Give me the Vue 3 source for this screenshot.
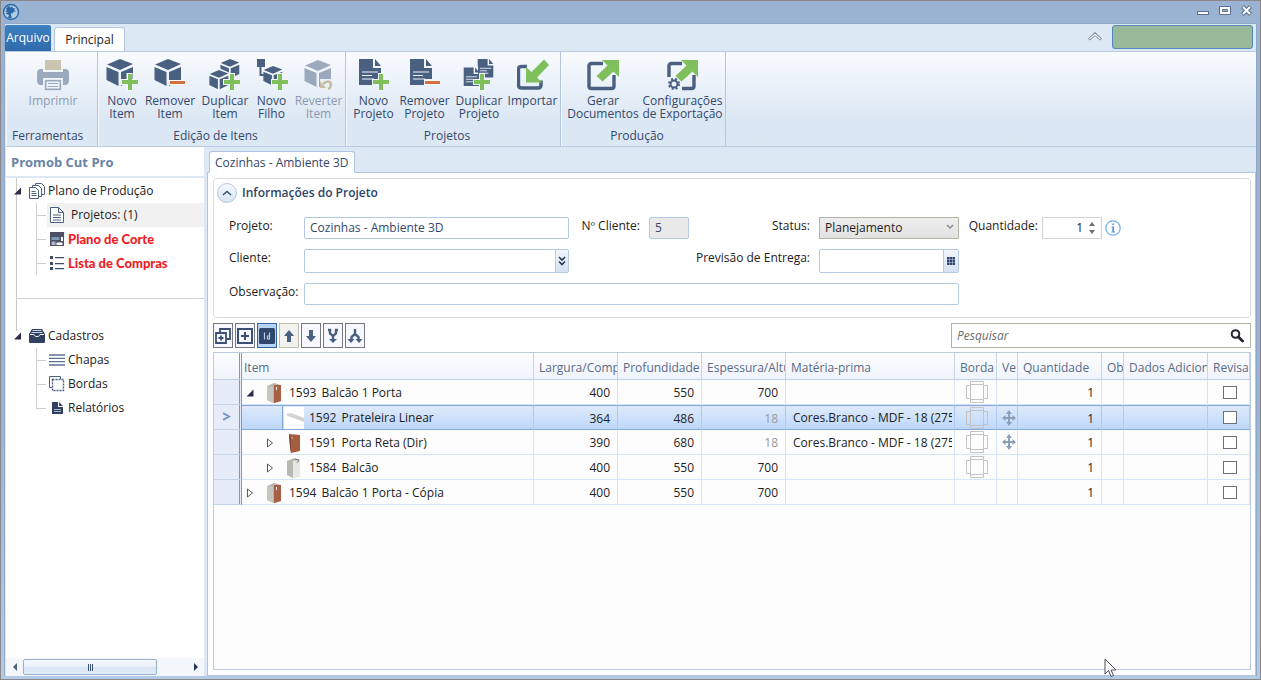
<script setup>
import { ref } from 'vue'

const ribbonGroups = [
  { name: 'Ferramentas', cls: 'g-tools', buttons: [{ icon: 'printer', lines: ['Imprimir'], disabled: true }] },
  {
    name: 'Edição de Itens',
    cls: 'g-items',
    buttons: [
      { icon: 'cube-add', lines: ['Novo', 'Item'] },
      { icon: 'cube-remove', lines: ['Remover', 'Item'] },
      { icon: 'cube-dup', lines: ['Duplicar', 'Item'] },
      { icon: 'cube-child', lines: ['Novo', 'Filho'] },
      { icon: 'cube-undo', lines: ['Reverter', 'Item'], disabled: true },
    ],
  },
  {
    name: 'Projetos',
    cls: 'g-projects',
    buttons: [
      { icon: 'doc-add', lines: ['Novo', 'Projeto'] },
      { icon: 'doc-remove', lines: ['Remover', 'Projeto'] },
      { icon: 'doc-dup', lines: ['Duplicar', 'Projeto'] },
      { icon: 'import', lines: ['Importar'] },
    ],
  },
  {
    name: 'Produção',
    cls: 'g-production',
    buttons: [
      { icon: 'export', lines: ['Gerar', 'Documentos'] },
      { icon: 'export-cfg', lines: ['Configurações', 'de Exportação'] },
    ],
  },
]

const tools = [
  { icon: 't-expand', label: 'Expandir tudo' },
  { icon: 't-plus', label: 'Expandir' },
  { icon: 't-id', label: 'Mostrar Id', cls: 'on' },
  { icon: 't-up', label: 'Mover para cima', cls: 'dim' },
  { icon: 't-down', label: 'Mover para baixo' },
  { icon: 't-merge', label: 'Agrupar' },
  { icon: 't-split', label: 'Separar' },
]

const rows = ref([
  { id: 1593, name: 'Balcão 1 Porta', level: 0, exp: 'open', icon: 'p-cabinet', w: 400, d: 550, h: 700, edge: true, qty: 1, rev: false },
  { id: 1592, name: 'Prateleira Linear', level: 1, exp: '', icon: 'p-shelf', w: 364, d: 486, h: 18, mat: 'Cores.Branco - MDF - 18 (2750', edge: true, vein: true, qty: 1, rev: false, selected: true },
  { id: 1591, name: 'Porta Reta (Dir)', level: 1, exp: 'closed', icon: 'p-door', w: 390, d: 680, h: 18, mat: 'Cores.Branco - MDF - 18 (2750', edge: true, vein: true, qty: 1, rev: false },
  { id: 1584, name: 'Balcão', level: 1, exp: 'closed', icon: 'p-box', w: 400, d: 550, h: 700, edge: true, qty: 1, rev: false },
  { id: 1594, name: 'Balcão 1 Porta - Cópia', level: 0, exp: 'closed', icon: 'p-cabinet', w: 400, d: 550, h: 700, qty: 1, rev: false },
])

const project = ref('Cozinhas - Ambiente 3D')
const clientNo = ref('5')
const client = ref('')
const note = ref('')
const delivery = ref('')
const status = ref('Planejamento')
const quantity = ref(1)
const search = ref('')
</script>

<template>
  <div class="window">
    <svg class="defs" aria-hidden="true">
      <symbol id="plus" viewBox="0 0 16 16">
        <path d="M6 0h4v6h6v4h-6v6H6v-6H0V6h6z" fill="#7fc05c" />
      </symbol>
      <symbol id="cube" viewBox="0 0 28 28">
        <g fill="#4a6081">
          <path d="M14 0L27 5L14 11L1 5.500z" />
          <path d="M0.500 8L12.500 13V27L0.500 21z" />
          <path d="M15 13L27 8V21L15 27z" />
        </g>
      </symbol>
      <symbol id="doc" viewBox="0 0 24 28">
        <path d="M1 0H15V9H23V26H1z M17 0L23 7H17z" fill="#4a6081" />
        <path d="M4 13H20M4 16.500H14M4 20H16" stroke="#eef3fa" stroke-width="1.200" fill="none" />
      </symbol>
      <symbol id="printer" viewBox="0 0 32 32">
        <rect x="8" y="1" width="16" height="10" fill="#a09468" />
        <path d="M0 14q0-4 4-4h2v3h20v-3h2q4 0 4 4v7q0 5-4 5h-2v-7H6v7H4q-4 0-4-5z" fill="#4a6081" />
        <rect x="8.700" y="21.700" width="14.600" height="8.600" fill="#f3f7fc" stroke="#4a6081" stroke-width="1.600" />
        <path d="M11 24.500h10M11 27.500h10" stroke="#4a6081" />
      </symbol>
      <symbol id="cube-add" viewBox="0 0 32 32">
        <use href="#cube" x="0" y="0" width="28" height="28" />
        <path d="M20.500 14h6v6h6v6h-6v6h-6v-6h-6v-6h6z" fill="#f3f7fc" />
        <use href="#plus" x="16" y="15" width="16" height="16" />
      </symbol>
      <symbol id="cube-remove" viewBox="0 0 32 32">
        <use href="#cube" x="0" y="0" width="28" height="28" />
        <path d="M15 21h17v5H15z" fill="#f3f7fc" />
        <rect x="16" y="22" width="15" height="3" fill="#d2713c" />
      </symbol>
      <symbol id="cube-dup" viewBox="0 0 32 32">
        <use href="#cube" x="11" y="0" width="20" height="20" />
        <path d="M10 9L21 14V31L10 32L0 28V14z" fill="#f0f5fb" />
        <use href="#cube" x="0" y="11" width="20" height="20" />
        <path d="M20 14h6v6h6v6h-6v6h-6v-6h-6v-6h6z" fill="#f0f5fb" />
        <use href="#plus" x="15" y="15" width="16" height="16" />
      </symbol>
      <symbol id="cube-child" viewBox="0 0 32 32">
        <rect x="1" y="0" width="8" height="8" fill="#4a6081" />
        <path d="M4.500 8V16H9" fill="none" stroke="#4a6081" stroke-width="2" />
        <use href="#cube" x="7" y="7" width="20" height="20" />
        <path d="M21 14h6v6h6v6h-6v6h-6v-6h-6v-6h6z" fill="#f0f5fb" />
        <use href="#plus" x="16" y="15" width="16" height="16" />
      </symbol>
      <symbol id="cube-undo" viewBox="0 0 32 32">
        <use href="#cube" x="1" y="1" width="28" height="28" />
        <path d="M17 20h14v12H17z" fill="#eaf1f9" />
        <path d="M20 25q6-5 8 0q0 4-3 5" fill="none" stroke="#a88a52" stroke-width="2.500" />
        <path d="M17 22v7h6z" fill="#a88a52" />
      </symbol>
      <symbol id="doc-add" viewBox="0 0 32 32">
        <use href="#doc" x="0" y="0" width="24" height="28" />
        <path d="M20 14h6v6h6v6h-6v6h-6v-6h-6v-6h6z" fill="#f0f5fb" />
        <use href="#plus" x="15" y="15" width="16" height="16" />
      </symbol>
      <symbol id="doc-remove" viewBox="0 0 32 32">
        <use href="#doc" x="0" y="0" width="24" height="28" />
        <path d="M15 20h17v6H15z" fill="#f0f5fb" />
        <rect x="16" y="22" width="15" height="3" fill="#d2713c" />
      </symbol>
      <symbol id="doc-dup" viewBox="0 0 32 32">
        <use href="#doc" x="14" y="0" width="17" height="20" />
        <path d="M0 7h15v22H0z" fill="#f0f5fb" />
        <use href="#doc" x="0" y="8" width="17" height="21" />
        <path d="M16 14h6v6h6v6h-6v6h-6v-6h-6v-6h6z" fill="#f0f5fb" />
        <use href="#plus" x="11" y="15" width="16" height="16" />
      </symbol>
      <symbol id="import" viewBox="0 0 32 32">
        <path d="M10 7.500H4.500q-3 0-3 3V26q0 3 3 3H21q3 0 3-3V21.500" fill="none" stroke="#4a6081" stroke-width="3.400" />
        <path d="M9 8L14.500 13L27 0.500L32 6L20 18.500L25 23.500H9z" fill="#7fc05c" />
      </symbol>
      <symbol id="export" viewBox="0 0 32 32">
        <path d="M16 4.500H4.500q-2.500 0-2.500 2.500V27q0 2.500 2.500 2.500H24.500q2.500 0 2.500-2.500V16" fill="none" stroke="#4a6081" stroke-width="3.400" />
        <path d="M15 1H32V18L26.500 12.500L15.500 22.500L9.500 17L20.500 6.500z" fill="#7fc05c" />
      </symbol>
      <symbol id="export-cfg" viewBox="0 0 32 32">
        <path d="M15 4.500H4.500q-2.500 0-2.500 2.500V18M15 29.500H24.500q2.500 0 2.500-2.500V16" fill="none" stroke="#4a6081" stroke-width="3.400" />
        <path d="M14 1H31V18L25.500 12.500L14.500 22.500L8.500 17L19.500 6.500z" fill="#7fc05c" />
        <circle cx="7" cy="25" r="3.500" fill="none" stroke="#4a6081" stroke-width="2" />
        <circle cx="7" cy="25" r="5" fill="none" stroke="#4a6081" stroke-width="2" stroke-dasharray="2 2" />
      </symbol>

      <symbol id="t-expand" viewBox="0 0 18 18">
        <path d="M6 6V2h10v10h-4" fill="none" stroke="#3b5074" stroke-width="1.800" />
        <path d="M2 6h10v10H2zM7 8.500v5M4.500 11h5" fill="none" stroke="#3b5074" stroke-width="1.800" />
      </symbol>
      <symbol id="t-plus" viewBox="0 0 18 18">
        <path d="M2 2h14v14H2zM9 5v8M5 9h8" fill="none" stroke="#3b5074" stroke-width="2" />
      </symbol>
      <symbol id="t-id" viewBox="0 0 18 18">
        <rect x="1" y="1" width="16" height="16" rx="1.500" fill="#30466a" />
        <path d="M6.500 5.500v7M11.500 5.500v7M11.500 9h-2v3h2" fill="none" stroke="#b9cbe2" stroke-width="1.200" />
      </symbol>
      <symbol id="t-up" viewBox="0 0 18 18">
        <path d="M9 3L14 9H11V15H7V9H4z" fill="#4a6081" />
      </symbol>
      <symbol id="t-down" viewBox="0 0 18 18">
        <path d="M9 15L14 9H11V3H7V9H4z" fill="#4a6081" />
      </symbol>
      <symbol id="t-merge" viewBox="0 0 18 18">
        <path d="M4 3H6V6.500L9 9L12 6.500V3H14M9 9v4" fill="none" stroke="#4a6081" stroke-width="2.400" />
        <path d="M5 12H13L9 16z" fill="#4a6081" />
      </symbol>
      <symbol id="t-split" viewBox="0 0 18 18">
        <path d="M9 2V7L5.500 10V13M9 7L12.500 10V13" fill="none" stroke="#4a6081" stroke-width="2.400" />
        <path d="M1.500 12H8.500L5 16zM9.500 12H16.500L13 16z" fill="#4a6081" />
      </symbol>

      <symbol id="p-cabinet" viewBox="0 0 20 22">
        <path d="M3 4L10 1L17 3V19L10 21L3 18z" fill="#b9b5ab" />
        <path d="M3 4L9 5V21L3 18z" fill="#c7c5bf" />
        <path d="M10 3L17 3V19L10 21z" fill="#a85f43" />
        <path d="M12.500 5v3" stroke="#fff" />
      </symbol>
      <symbol id="p-shelf" viewBox="0 0 20 22">
        <rect width="20" height="22" fill="#fff" />
        <path d="M2 7L7 6L20 11V15L4 9z" fill="#d4d4d4" />
      </symbol>
      <symbol id="p-door" viewBox="0 0 20 22">
        <path d="M5 2L16 3V19L7 21L6 15z" fill="#a55d40" />
        <path d="M5 2L7 5V21L6 15z" fill="#7d4430" />
        <path d="M8 5v2" stroke="#e3bca9" />
      </symbol>
      <symbol id="p-box" viewBox="0 0 20 22">
        <path d="M3 4L10 1L16 3V19L9 21L3 18z" fill="#b8b8b2" />
        <path d="M9 4L16 3V19L9 21z" fill="#e8e8e5" />
        <path d="M11 2L15 3L13 6" stroke="#777" fill="none" />
      </symbol>
    </svg>

    <header class="titlebar">
      <svg class="logo" viewBox="0 0 18 18" aria-hidden="true">
        <circle cx="9" cy="9" r="7.500" fill="#b3cbe5" stroke="#2c6aa6" stroke-width="1.400" />
        <path d="M4 6Q5 3 8 3L7.500 4.500L11 3.500L10.500 5L13.500 5.500L12 6.500L14 8.500L11.500 8.500L11 10.500L9.500 9.500L9 12L10 15.500L6 15L7 12L3.500 10.500L5.500 9.500L3 8L5 7.500z" fill="#2c6aa6" />
      </svg>
      <div class="caption-buttons">
        <button aria-label="Minimizar">
          <svg viewBox="0 0 14 14"><rect x="1.500" y="6.500" width="11" height="3" fill="#fff" stroke="#5d6f8c" /></svg>
        </button>
        <button aria-label="Maximizar">
          <svg viewBox="0 0 14 14">
            <path d="M1.500 1.500h11v8h-11zM4.500 4.500v2h5v-2z" fill="#fff" fill-rule="evenodd" stroke="#5d6f8c" />
          </svg>
        </button>
        <button aria-label="Fechar">
          <svg viewBox="0 0 14 14">
            <path d="M2.500 1.500l8 8M10.500 1.500l-8 8" stroke="#5d6f8c" stroke-width="4" />
            <path d="M3 2l7 7M10 2l-7 7" stroke="#fff" stroke-width="2" />
          </svg>
        </button>
      </div>
    </header>

    <div class="frame">
      <nav class="ribbon-tabs">
        <button class="file">Arquivo</button>
        <button class="rtab">Principal</button>
        <span class="grow"></span>
        <button class="collapse" aria-label="Recolher faixa">
          <svg viewBox="0 0 14 9"><path d="M1 7.500L7 2l6 5.500" fill="none" stroke="#7b8494" stroke-width="3" /><path d="M1.500 7L7 2.300L12.500 7" fill="none" stroke="#fff" stroke-width="1.200" /></svg>
        </button>
        <div class="account"></div>
      </nav>

      <section class="ribbon">
        <div v-for="g in ribbonGroups" :key="g.name" class="group" :class="g.cls">
          <div class="group-buttons">
            <button v-for="b in g.buttons" :key="b.icon" class="rbtn" :disabled="b.disabled">
              <svg width="32" height="32" aria-hidden="true"><use :href="'#' + b.icon" width="32" height="32" /></svg>
              <span v-for="l in b.lines" :key="l">{{ l }}</span>
            </button>
          </div>
          <div class="group-name">{{ g.name }}</div>
        </div>
      </section>

      <div class="body">
        <aside class="sidebar">
          <h1>Promob Cut Pro</h1>
          <div class="tree">
            <section class="branch">
              <div class="node root">
                <svg class="tri" viewBox="0 0 8 8"><path d="M8 0V8H0z" fill="#2e2c4d" /></svg>
                <svg class="ico16" viewBox="0 0 16 16" fill="#fff" stroke="#4a6081">
                  <path d="M6.500 0.500h6l3 3v8h-9z" /><path d="M3.500 2.500h6l3 3v8h-9z" /><path d="M0.500 4.500h6l3 3v8h-9zM2.500 8.500h4M2.500 10.500h5M2.500 12.500h5" />
                </svg>
                <span>Plano de Produção</span>
              </div>
              <ul>
                <li class="node active">
                  <svg class="ico16" viewBox="0 0 16 16" fill="#fff" stroke="#4a6081">
                    <path d="M1.500 0.500h8l5 5v10h-13zM9.500 0.500v5h5M4 8h8M4 10.500h8M4 13h8" />
                  </svg>
                  <span>Projetos: (1)</span>
                </li>
                <li class="node hot">
                  <svg class="ico16" viewBox="0 0 16 16">
                    <path d="M1 1h14v14H1z" fill="#4a4f63" />
                    <path d="M2.500 6h8v3h-8z" fill="#8197b8" />
                    <path d="M12 6h2v4h-2zM7.500 11.500h6v2.500h-6z" fill="#fff" />
                    <path d="M2.500 10.500h4v3.500h-4z" fill="#a9b8cf" />
                  </svg>
                  <span>Plano de Corte</span>
                </li>
                <li class="node hot">
                  <svg class="ico16" viewBox="0 0 16 16" fill="#3d4b6b">
                    <path d="M1 1h3v3H1zM1 7h3v3H1zM1 12h3v3H1zM6 2h9v1.200H6zM6 8h9v1.200H6zM6 13h9v1.200H6z" />
                  </svg>
                  <span>Lista de Compras</span>
                </li>
              </ul>
            </section>
            <hr />
            <section class="branch last">
              <div class="node root">
                <svg class="tri" viewBox="0 0 8 8"><path d="M8 0V8H0z" fill="#2e2c4d" /></svg>
                <svg class="ico16" viewBox="0 0 16 16">
                  <path d="M3 1h10l3 5v8q0 1-1 1H1q-1 0-1-1V6z" fill="#30415f" />
                  <path d="M3.500 2.500h9M2.500 4.500h11" stroke="#c7d3e4" />
                  <path d="M1 6.500h4l1.500 2h3l1.500-2h4" stroke="#eef3fa" fill="none" />
                </svg>
                <span>Cadastros</span>
              </div>
              <ul>
                <li class="node">
                  <svg class="ico16" viewBox="0 0 16 16"><path d="M0 3h16M0 6.300h16M0 9.700h16M0 13h16" stroke="#5f7294" stroke-width="1.300" /></svg>
                  <span>Chapas</span>
                </li>
                <li class="node">
                  <svg class="ico16" viewBox="0 0 16 16" fill="none" stroke="#4a6081">
                    <path d="M3 11.500H0.500V0.500h11V3" /><path d="M3.500 3.500h11v11h-11z" stroke-dasharray="2 1" stroke-width="1.400" />
                  </svg>
                  <span>Bordas</span>
                </li>
                <li class="node">
                  <svg class="ico16" viewBox="0 0 16 16"><path d="M3 2h6v5h5v7H3zM10 2l4 4h-4z" fill="#30415f" /><path d="M5 9.500h7M5 11.500h7" stroke="#c7d3e4" stroke-width="0.800" /></svg>
                  <span>Relatórios</span>
                </li>
              </ul>
            </section>
          </div>
          <div class="hscroll">
            <button aria-label="Rolar à esquerda"><svg viewBox="0 0 4 8"><path d="M4 0v8L0 4z" fill="#4a6081" /></svg></button>
            <div class="track"><div class="thumb"><i></i><i></i><i></i></div></div>
            <button aria-label="Rolar à direita"><svg viewBox="0 0 4 8"><path d="M0 0v8L4 4z" fill="#24365a" /></svg></button>
          </div>
        </aside>

        <main class="main">
          <div class="doc-tabs"><button class="doc-tab">Cozinhas - Ambiente 3D</button></div>
          <div class="doc">
            <section class="info">
              <div class="info-head">
                <button class="round" aria-label="Recolher">
                  <svg viewBox="0 0 10 6"><path d="M1 5l4-3.500L9 5" fill="none" stroke="#3b5074" stroke-width="1.500" /></svg>
                </button>
                <h2>Informações do Projeto</h2>
              </div>
              <form class="form" @submit.prevent>
                <label for="f-project">Projeto:</label>
                <input id="f-project" v-model="project" class="box" />
                <label for="f-no" class="right">Nº Cliente:</label>
                <input id="f-no" v-model="clientNo" class="box locked" readonly />
                <label for="f-status" class="right">Status:</label>
                <div class="select">
                  <select id="f-status" v-model="status"><option>Planejamento</option></select>
                  <svg viewBox="0 0 8 6"><path d="M1 1l3 3l3-3" fill="none" stroke="#8a8a8a" stroke-width="1.500" /></svg>
                </div>
                <label for="f-qty" class="near">Quantidade:</label>
                <div class="spin">
                  <input id="f-qty" v-model="quantity" type="number" min="1" />
                  <div class="arrows">
                    <button type="button" aria-label="Aumentar"><svg viewBox="0 0 6 4"><path d="M0 4l3-4l3 4z" fill="#6d6d78" /></svg></button>
                    <button type="button" aria-label="Diminuir"><svg viewBox="0 0 6 4"><path d="M0 0l3 4l3-4z" fill="#6d6d78" /></svg></button>
                  </div>
                </div>
                <svg class="hint" viewBox="0 0 16 16"><circle cx="8" cy="8" r="7.200" fill="#fff" stroke="#72b1ea" stroke-width="1.300" /><path d="M7.300 3.500h1.600v1.600H7.300zM6.500 6.500H9V11.500H10V12.500H6.500V11.500H7.300V7.500H6.500z" fill="#4c9ae0" /></svg>

                <label for="f-client">Cliente:</label>
                <div class="combo">
                  <input id="f-client" v-model="client" />
                  <button type="button" class="drop" aria-label="Selecionar cliente">
                    <svg width="8" height="10" viewBox="0 0 8 10"><path d="M1 1l3 3l3-3M1 5.500l3 3l3-3" fill="none" stroke="#24365a" stroke-width="1.600" /></svg>
                  </button>
                </div>
                <label for="f-date" class="right wide">Previsão de Entrega:</label>
                <div class="combo">
                  <input id="f-date" v-model="delivery" />
                  <button type="button" class="cal" aria-label="Abrir calendário">
                    <svg width="8" height="8" viewBox="0 0 8 8"><rect width="8" height="8" fill="#30466a" /><path d="M0 2.500h8M0 5.500h8M2.500 0v8M5.500 0v8" stroke="#c6d5ea" stroke-width="0.500" /></svg>
                  </button>
                </div>

                <label for="f-note" class="start">Observação:</label>
                <input id="f-note" v-model="note" class="box full" />
              </form>
            </section>

            <div class="toolbar">
              <button v-for="t in tools" :key="t.icon" class="tool" :class="t.cls" :aria-label="t.label">
                <svg width="18" height="18"><use :href="'#' + t.icon" width="18" height="18" /></svg>
              </button>
              <span class="grow"></span>
              <div class="search">
                <input v-model="search" type="text" placeholder="Pesquisar" aria-label="Pesquisar" />
                <svg viewBox="0 0 14 14"><circle cx="5.500" cy="5" r="3.800" fill="none" stroke="#26262e" stroke-width="2" /><path d="M8.500 8l4 4" stroke="#26262e" stroke-width="2.800" stroke-linecap="round" /></svg>
              </div>
            </div>

            <div class="grid">
              <table>
                <colgroup>
                  <col class="c28" /><col /><col class="c84" /><col class="c84" /><col class="c84" /><col class="c169" />
                  <col class="c42" /><col class="c21" /><col class="c84" /><col class="c22" /><col class="c84" /><col class="c42" />
                </colgroup>
                <thead>
                  <tr>
                    <th class="mark"></th>
                    <th class="first"><div>Item</div></th>
                    <th><div>Largura/Comp</div></th>
                    <th><div>Profundidade</div></th>
                    <th><div>Espessura/Altu</div></th>
                    <th><div>Matéria-prima</div></th>
                    <th><div>Borda</div></th>
                    <th><div>Ve</div></th>
                    <th><div>Quantidade</div></th>
                    <th><div>Ob</div></th>
                    <th><div>Dados Adicion</div></th>
                    <th><div>Revisa</div></th>
                  </tr>
                </thead>
                <tbody>
                  <tr v-for="r in rows" :key="r.id" :class="{ selected: r.selected }">
                    <td class="mark">
                      <svg v-if="r.selected" viewBox="0 0 8 8"><path d="M1 1l5.500 3L1 7" fill="none" stroke="#6d95c9" stroke-width="1.600" /></svg>
                    </td>
                    <td class="item">
                      <div class="cell" :class="'lv' + r.level">
                        <button v-if="r.exp" class="exp" :aria-label="r.exp === 'open' ? 'Recolher item' : 'Expandir item'">
                          <svg v-if="r.exp === 'open'" viewBox="0 0 8 10"><path d="M7.500 1.500V8.500H0.500z" fill="#2e2c4d" /></svg>
                          <svg v-else viewBox="0 0 8 10"><path d="M1.500 1L6.500 5L1.500 9z" fill="#fff" stroke="#5a5a66" /></svg>
                        </button>
                        <span v-else class="exp"></span>
                        <svg class="part" width="20" height="22"><use :href="'#' + r.icon" width="20" height="22" /></svg>
                        <span class="id">{{ r.id }}</span>
                        <span>{{ r.name }}</span>
                      </div>
                    </td>
                    <td class="num">{{ r.w }}</td>
                    <td class="num">{{ r.d }}</td>
                    <td class="num" :class="{ soft: r.h === 18 }">{{ r.h }}</td>
                    <td><div class="clip">{{ r.mat }}</div></td>
                    <td class="mid">
                      <svg v-if="r.edge" width="24" height="24" viewBox="0 0 24 24" fill="none" stroke="#c3c3c3">
                        <path d="M5.500 4.500h13v15h-13zM5.500 1.500h13v3h-13zM5.500 19.500h13v3h-13zM1.500 5.500h4v13h-4zM18.500 5.500h4v13h-4z" />
                      </svg>
                    </td>
                    <td class="mid">
                      <svg v-if="r.vein" width="14" height="16" viewBox="0 0 14 16" fill="#8ca0bd">
                        <path d="M7 0l3 4H8v3h2.500V5L14 8l-3.500 3V9H8v3h2l-3 4l-3-4h2V9H3.500v2L0 8l3.500-3v2H6V4H4z" />
                      </svg>
                    </td>
                    <td class="num">{{ r.qty }}</td>
                    <td></td>
                    <td></td>
                    <td class="mid"><input v-model="r.rev" type="checkbox" :aria-label="'Revisado ' + r.id" /></td>
                  </tr>
                </tbody>
              </table>
            </div>
          </div>
        </main>
      </div>
    </div>
    <svg class="cursor" width="13" height="20" viewBox="0 0 13 20" aria-hidden="true">
      <path d="M1 1V16L4.500 12.500L7 18.500L9.500 17.500L7 12H12z" fill="#fff" stroke="#4f4c5e" />
    </svg>
  </div>
</template>

<style>
body {
  margin: 0;
}
</style>

<style scoped>
.window,
.window * {
  box-sizing: border-box;
}
.window {
  position: relative;
  min-height: 100vh;
  display: flex;
  flex-direction: column;
  padding: 0 3px 3px;
  border: 1px solid #8b8788;
  background: linear-gradient(#9ab3d2, #9ab3d2 60%, #b4cbe5);
  font-family: "Open Sans", "Noto Sans", sans-serif;
  font-size: 12px;
  line-height: 16px;
  color: #222;
}
button,
input,
select {
  font: inherit;
  color: inherit;
  margin: 0;
  padding: 0;
  border: 0;
  background: none;
}
.defs {
  position: absolute;
  width: 0;
  height: 0;
}
.grow {
  flex: 1;
}
.titlebar {
  height: 22px;
  display: flex;
  align-items: center;
  justify-content: space-between;
  padding-right: 3px;
}
.logo {
  width: 18px;
  height: 18px;
  margin-left: -2px;
}
.caption-buttons {
  display: flex;
  gap: 8px;
}
.caption-buttons button {
  width: 14px;
  height: 14px;
}
.caption-buttons svg {
  display: block;
}
.frame {
  flex: 1;
  display: flex;
  flex-direction: column;
  border: 1px solid #90a9c8;
  border-bottom: 0;
  padding: 0 0 0 1px;
  background: #dde8f5;
}
.ribbon-tabs {
  display: flex;
  align-items: flex-end;
  height: 27px;
  padding-right: 3px;
}
.file {
  width: 46px;
  height: 26px;
  margin: 0 3px 0 -1px;
  background: linear-gradient(#3c80bf, #2f6bac);
  border-radius: 2px 2px 0 0;
  color: #fff;
}
.rtab {
  width: 71px;
  height: 24px;
  background: #fff;
  border: 1px solid #b6c8de;
  border-bottom: 0;
  border-radius: 3px 3px 0 0;
}
.collapse {
  width: 14px;
  height: 30px;
  margin-right: 10px;
}
.collapse svg {
  display: block;
  width: 14px;
}
.account {
  width: 141px;
  height: 24px;
  margin-bottom: 2px;
  background: #98ba9b;
  border: 1px solid #5488bf;
  border-radius: 3px;
}
.ribbon {
  display: flex;
  height: 96px;
  border: 1px solid #b9cbe0;
  border-width: 1px 0;
  background: linear-gradient(#f9fbfe, #e4edf7 50%, #dbe7f4 75%, #dde8f5);
}
.group {
  display: flex;
  flex-direction: column;
  justify-content: space-between;
  border-right: 1px solid #b3c6db;
  box-shadow: inset 1px 0 #f4f8fc;
  color: #34486b;
}
.g-tools {
  width: 92px;
}
.g-items {
  width: 248px;
}
.g-projects {
  width: 215px;
}
.g-production {
  width: 165px;
}
.group-buttons {
  display: grid;
  padding: 7px 0 0 5px;
}
.g-tools .group-buttons {
  grid-template-columns: 84px;
}
.g-items .group-buttons {
  grid-template-columns: 38px 58px 52px 41px 53px;
}
.g-projects .group-buttons {
  grid-template-columns: 45px 57px 52px 55px;
}
.g-production .group-buttons {
  grid-template-columns: 74px 85px;
}
.rbtn {
  display: flex;
  flex-direction: column;
  align-items: center;
  line-height: 13px;
  white-space: nowrap;
}
.rbtn svg {
  margin-bottom: 3px;
  flex: none;
}
.rbtn:disabled {
  opacity: 0.5;
}
.group-name {
  text-align: center;
  line-height: 20px;
  padding-right: 12px;
}
.g-tools .group-name {
  text-align: left;
  padding-left: 6px;
}
.body {
  flex: 1;
  display: flex;
  gap: 3px;
}
.sidebar {
  width: 198px;
  flex: none;
  display: flex;
  flex-direction: column;
  background: #fff;
}
h1 {
  margin: 0;
  padding-left: 5px;
  height: 31px;
  line-height: 30px;
  font-size: 13px;
  font-weight: 700;
  color: #6784a8;
  border-bottom: 2px solid #dce8f6;
}
.tree {
  flex: 1;
}
.branch {
  padding-top: 1px;
  background: linear-gradient(#c9c9c9, #c9c9c9) 10px 0 / 1px 100% no-repeat;
}
.branch.last {
  padding-top: 25px;
  background-size: 1px 32px;
}
hr {
  margin: 0 0 0 10px;
  border: 0;
  border-top: 1px solid #d2d2d2;
}
.node {
  display: flex;
  align-items: center;
  height: 24px;
  gap: 3px;
}
.node.root {
  padding-left: 8px;
}
.tri {
  width: 7px;
  height: 8px;
  margin-right: 5px;
}
.ico16 {
  width: 16px;
  height: 16px;
  flex: none;
}
ul {
  list-style: none;
  margin: 0 0 0 30px;
  padding: 0 0 23px;
}
li.node {
  padding-left: 13px;
  background:
    linear-gradient(#cfcfcf, #cfcfcf) 0 12px / 10px 1px no-repeat,
    linear-gradient(#cfcfcf, #cfcfcf) 0 0 / 1px 100% no-repeat;
}
.last li.node:last-child {
  background-size: 10px 1px, 1px 12px;
}
.node.active {
  gap: 6px;
  background:
    linear-gradient(#cfcfcf, #cfcfcf) 0 12px / 10px 1px no-repeat,
    linear-gradient(#cfcfcf, #cfcfcf) 0 0 / 1px 100% no-repeat,
    linear-gradient(#f1f1f1, #f1f1f1) 11px 0 / 100% 100% no-repeat;
}
.node.hot {
  font-family: Lato, sans-serif;
  font-weight: 900;
  font-size: 13px;
  color: #f21d24;
}
.hscroll {
  display: flex;
  align-items: center;
  height: 18px;
  background: #f3f7fc;
}
.hscroll button {
  width: 17px;
  height: 16px;
  display: flex;
  align-items: center;
  justify-content: center;
}
.hscroll button svg {
  width: 4px;
  height: 8px;
}
.track {
  flex: 1;
}
.thumb {
  width: 82%;
  height: 16px;
  display: flex;
  align-items: center;
  justify-content: center;
  gap: 1px;
  border: 1px solid #96afcf;
  border-radius: 2px;
  background: linear-gradient(#f6f9fd, #e8f0f9 50%, #d8e5f3 52%, #e4edf7);
}
.thumb i {
  width: 1px;
  height: 7px;
  background: #3b5074;
}
.main {
  flex: 1;
  min-width: 0;
  display: flex;
  flex-direction: column;
}
.doc-tabs {
  display: flex;
  padding: 4px 0 0 2px;
}
.doc-tab {
  height: 22px;
  padding: 1px 5px 0;
  margin-bottom: -1px;
  background: #fff;
  border: 1px solid #b0c5de;
  border-bottom-color: #fff;
  border-radius: 3px 3px 0 0;
  color: #34486b;
  z-index: 1;
}
.doc {
  flex: 1;
  display: flex;
  flex-direction: column;
  padding: 5px 4px 5px 5px;
  background: #fff;
  border: 1px solid #b0c5de;
}
.info {
  border: 1px solid #dcdcdf;
  border-radius: 4px;
  padding: 4px 0 12px 3px;
}
.info-head {
  display: flex;
  align-items: center;
  gap: 5px;
}
.round {
  width: 20px;
  height: 20px;
  border-radius: 50%;
  border: 1px solid #b2c7e2;
  background: linear-gradient(#f5f8fd, #d8e5f4);
  display: flex;
  align-items: center;
  justify-content: center;
}
.round svg {
  width: 10px;
  height: 6px;
}
h2 {
  margin: 0;
  font-size: 12px;
  font-weight: 600;
  color: #2e4366;
}
.form {
  display: grid;
  grid-template-columns: 75px 265px 80px 40px 130px 140px 83px 60px auto;
  grid-template-rows: 22px 24px 22px;
  row-gap: 10px;
  align-items: stretch;
  justify-content: start;
  padding: 14px 0 0 12px;
}
.form label {
  line-height: 18px;
  white-space: nowrap;
}
.right {
  text-align: right;
  padding-right: 9px;
}
.near {
  text-align: right;
  padding-right: 4px;
}
.wide {
  grid-column: 3 / 6;
}
.start {
  grid-column: 1;
}
.full {
  grid-column: 2 / 7;
}
.box,
.combo {
  min-width: 0;
  width: 100%;
  border: 1px solid #b4c9e3;
  border-radius: 2px;
  background: #fff;
}
.box {
  padding: 0 5px;
  color: #34486b;
}
.locked {
  background: #e9e9ea;
}
.combo {
  display: flex;
}
.combo input {
  flex: 1;
  min-width: 0;
}
.combo button {
  display: flex;
  align-items: center;
  justify-content: center;
  border-left: 1px solid #b4c9e3;
  background: linear-gradient(#f1f5fb, #d5e2f2);
}
.drop {
  width: 13px;
}
.cal {
  width: 15px;
}
.select {
  display: grid;
}
.select select {
  grid-area: 1 / 1;
  appearance: none;
  padding-left: 5px;
  border: 1px solid #b4b4a8;
  background: linear-gradient(#eeeeee, #e2e2e3);
}
.select svg {
  grid-area: 1 / 1;
  width: 8px;
  height: 6px;
  justify-self: end;
  align-self: center;
  margin: 0 5px 2px 0;
  pointer-events: none;
}
.spin {
  display: flex;
  border: 1px solid #d3d3d3;
}
.spin input {
  width: 40px;
  text-align: right;
  appearance: textfield;
}
.spin input::-webkit-inner-spin-button {
  appearance: none;
  margin: 0;
}
.arrows {
  flex: 1;
  display: flex;
  flex-direction: column;
  justify-content: center;
  gap: 4px;
  align-items: center;
}
.arrows button {
  width: 6px;
  height: 4px;
}
.arrows svg {
  display: block;
}
.hint {
  width: 16px;
  height: 16px;
  margin: 3px 0 0 3px;
}
.toolbar {
  display: flex;
  gap: 2px;
  margin: 5px 0 4px;
  height: 25px;
}
.tool {
  width: 20px;
  display: flex;
  align-items: center;
  justify-content: center;
  background: #f6f8fd;
  border: 1px solid #77777f;
}
.tool svg {
  flex: none;
}
.tool.on {
  background: #b8d4f2;
  border-color: #2f65a5;
}
.tool.dim {
  background: #f2f2ee;
  border-color: #bdbdae;
}
.search {
  width: 300px;
  display: flex;
  align-items: center;
  border: 1px solid #b4b4a6;
  padding: 0 6px 0 5px;
}
.search input {
  flex: 1;
  font-style: italic;
}
.search input::placeholder {
  color: #6d6d6d;
  opacity: 1;
}
.search svg {
  width: 14px;
  height: 14px;
}
.grid {
  flex: 1;
  border: 1px solid #bccbe0;
  background: #fefdfe;
}
table {
  width: 100%;
  table-layout: fixed;
  border-collapse: separate;
  border-spacing: 0;
}
.c28 {
  width: 28px;
}
.c84 {
  width: 84px;
}
.c169 {
  width: 169px;
}
.c42 {
  width: 42px;
}
.c21 {
  width: 21px;
}
.c22 {
  width: 22px;
}
th {
  height: 27px;
  padding: 3px 0 0 5px;
  text-align: left;
  font-weight: 400;
  color: #5a6b86;
  background: linear-gradient(#fdfdff, #eff4fb);
  border-right: 1px solid #c6d5e8;
  border-bottom: 1px solid #c0cfe3;
}
th div,
.clip {
  overflow: hidden;
  white-space: nowrap;
}
th.first {
  padding-left: 2px;
}
td {
  height: 25px;
  padding: 1px 2px 0 7px;
  background: #fefdfe;
  border-right: 1px solid #d5e4f6;
  border-bottom: 1px solid #d5e4f6;
  line-height: 16px;
  white-space: nowrap;
}
.mark {
  padding: 0;
  text-align: center;
  border-right: 3px double #8497b5;
}
td.mark {
  background: #e7edf8;
  border-bottom-color: #c6d4e8;
}
.mark svg {
  width: 9px;
  height: 9px;
}
.num {
  padding: 2px 7px 0 0;
  text-align: right;
}
.soft {
  color: #999;
}
.mid {
  padding: 0 0 0 3px;
  text-align: center;
}
.mid svg,
.mid input {
  display: block;
  margin: -1px auto;
}
.item {
  padding: 0;
}
.cell {
  display: flex;
  align-items: center;
  height: 24px;
  padding-top: 1px;
}
.lv0 {
  padding-left: 4px;
}
.lv1 {
  padding-left: 24px;
}
.exp {
  width: 8px;
  height: 10px;
  margin-right: 10px;
}
.exp svg {
  display: block;
}
.part {
  margin-right: 5px;
}
.id {
  margin-right: 5px;
}
.selected td:not(.mark) {
  background: linear-gradient(#dfeafb, #bcd8fa);
  border-top: 1px solid #84a9d6;
  border-bottom: 1px solid #84a9d6;
  border-right-color: #aecbef;
}
.selected .cell {
  height: 23px;
  padding-top: 0;
}
.selected .exp {
  width: 17px;
  margin-right: 1px;
  height: 23px;
  border-right: 1px solid #84a9d6;
}
input[type="checkbox"] {
  appearance: none;
  width: 14px;
  height: 13px;
  border: 1px solid #6f6f78;
  background: #fff;
}
.cursor {
  position: absolute;
  left: 1103px;
  bottom: 1px;
}
</style>
